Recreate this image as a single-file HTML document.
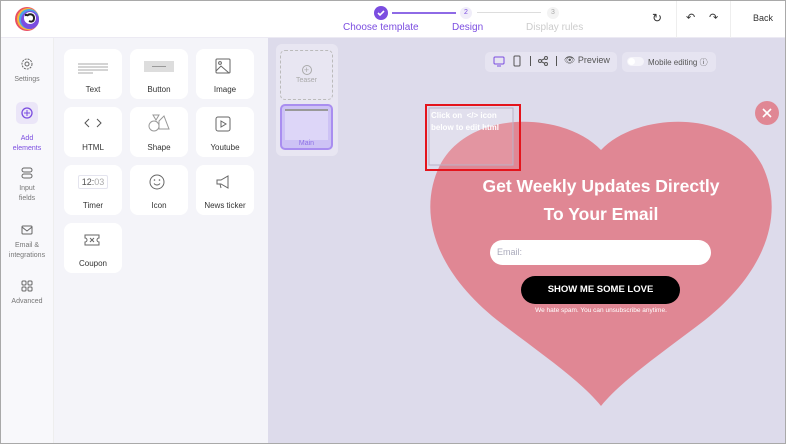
<!DOCTYPE html>
<html><head><style>
*{box-sizing:border-box;margin:0;padding:0}
body{width:786px;height:444px;overflow:hidden;font-family:"Liberation Sans",sans-serif;background:#fff;position:relative}
.frame{position:absolute;inset:0;border:1px solid #a9a9a9;z-index:50;pointer-events:none}
.hdr{position:absolute;left:0;top:0;width:786px;height:38px;background:#fff;border-bottom:1px solid #eceaf3}
.nav{position:absolute;left:0;top:38px;width:54px;height:406px;background:#f8f8fb;border-right:1px solid #eee}
.panel{position:absolute;left:54px;top:38px;width:214px;height:406px;background:#f4f4f9}
.canvas{position:absolute;left:268px;top:38px;width:518px;height:406px;background:#dddbeb}
.card{position:absolute;width:58px;height:50px;background:#fff;border-radius:8px;text-align:center;font-size:8px;color:#333}
.card .l{position:absolute;left:0;right:0;bottom:5px}
.card svg{position:absolute;left:19px;top:9px}
.ni{position:absolute;left:0;width:54px;text-align:center;font-size:7px;color:#777;line-height:10px}
.ni svg{display:block;margin:0 auto 5px}
</style></head><body>
<div class="hdr">
  <svg style="position:absolute;left:14px;top:6px" width="26" height="26" viewBox="0 0 26 26"><circle cx="13" cy="13" r="12" fill="#e94f64"/><circle cx="14" cy="13" r="11" fill="#f5b83a"/><circle cx="15" cy="13" r="10" fill="#4aa3e8"/><circle cx="16" cy="14" r="9" fill="#7b4de0"/><circle cx="16" cy="12" r="6" fill="#fff"/><path d="M13 10c2-3 7-2 7 2s-3 4-5 3" stroke="#222" stroke-width="2" fill="none"/><circle cx="12" cy="9" r="1.2" fill="#222"/></svg>
  <svg style="position:absolute;left:374px;top:6px" width="14" height="14"><circle cx="7" cy="7" r="7" fill="#7b4de0"/><path d="M4 7l2 2 4-4" stroke="#fff" stroke-width="1.6" fill="none"/></svg>
  <div style="position:absolute;left:392px;top:12px;width:64px;height:2px;background:#8e6ae6"></div>
  <div style="position:absolute;left:460px;top:7px;width:12px;height:12px;border-radius:6px;background:#f0edf9;font-size:7px;color:#7b4de0;text-align:center;line-height:12px">2</div>
  <div style="position:absolute;left:477px;top:12px;width:64px;height:1px;background:#ddd"></div>
  <div style="position:absolute;left:547px;top:7px;width:12px;height:12px;border-radius:6px;background:#f3f3f3;font-size:7px;color:#aaa;text-align:center;line-height:12px">3</div>
  <div style="position:absolute;left:343px;top:22px;font-size:10px;color:#7b4de0">Choose template</div>
  <div style="position:absolute;left:452px;top:22px;font-size:10px;color:#7b4de0">Design</div>
  <div style="position:absolute;left:526px;top:22px;font-size:10px;color:#ccc">Display rules</div>
  <div style="position:absolute;left:652px;top:11px;font-size:12px;color:#333">↻</div>
  <div style="position:absolute;left:676px;top:0;width:1px;height:38px;background:#eee"></div>
  <div style="position:absolute;left:686px;top:11px;font-size:11px;color:#333">↶</div>
  <div style="position:absolute;left:709px;top:11px;font-size:11px;color:#333">↷</div>
  <div style="position:absolute;left:730px;top:0;width:1px;height:38px;background:#eee"></div>
  <div style="position:absolute;left:753px;top:13px;font-size:9px;color:#333">Back</div>
</div>
<div class="nav">
  <div class="ni" style="top:20px"><svg width="12" height="12" viewBox="0 0 12 12"><circle cx="6" cy="6" r="2" stroke="#666" fill="none"/><circle cx="6" cy="6" r="5" stroke="#666" stroke-dasharray="2 1" fill="none"/></svg>Settings</div>
  <div style="position:absolute;left:16px;top:64px;width:22px;height:22px;border-radius:5px;background:#ebe6f8"></div>
  <div class="ni" style="top:69px;color:#7b4de0"><svg width="12" height="12" viewBox="0 0 12 12"><circle cx="6" cy="6" r="5" stroke="#7b4de0" fill="none" stroke-width="1.3"/><path d="M6 3v6M3 6h6" stroke="#7b4de0"/></svg><br>Add<br>elements</div>
  <div class="ni" style="top:129px"><svg width="12" height="12"><rect x="1" y="1" width="10" height="4" rx="2" stroke="#666" fill="none"/><rect x="1" y="7" width="10" height="4" rx="2" stroke="#666" fill="none"/></svg>Input<br>fields</div>
  <div class="ni" style="top:186px"><svg width="12" height="12"><rect x="1" y="2" width="10" height="8" rx="1" stroke="#666" fill="none"/><path d="M1 3l5 4 5-4" stroke="#666" fill="none"/></svg>Email &amp;<br>integrations</div>
  <div class="ni" style="top:242px"><svg width="12" height="12"><rect x="1" y="1" width="4" height="4" rx="1" stroke="#666" fill="none"/><rect x="7" y="1" width="4" height="4" rx="1" stroke="#666" fill="none"/><rect x="1" y="7" width="4" height="4" rx="1" stroke="#666" fill="none"/><rect x="7" y="7" width="4" height="4" rx="1" stroke="#666" fill="none"/></svg>Advanced</div>
</div>
<div class="panel"></div>
<div class="card" style="left:64px;top:49px"><svg width="20" height="20" style="left:14px;width:30px"><path d="M0 6h30M0 9h30M0 12h30M0 15h15" stroke="#aaa"/></svg><div class="l">Text</div></div>
<div class="card" style="left:130px;top:49px"><svg width="30" height="12" style="left:14px;top:12px"><rect width="30" height="11" fill="#ddd"/><path d="M8 5.5h14" stroke="#999"/></svg><div class="l">Button</div></div>
<div class="card" style="left:196px;top:49px"><svg width="16" height="16" viewBox="0 0 16 16"><rect x="1" y="1" width="14" height="14" rx="1" stroke="#666" fill="none"/><circle cx="5" cy="5" r="1.4" stroke="#666" fill="none"/><path d="M1 13l5-5 8 7" stroke="#666" fill="none"/></svg><div class="l">Image</div></div>
<div class="card" style="left:64px;top:107px"><svg width="20" height="14"><path d="M6 3l-4 4 4 4M14 3l4 4-4 4" stroke="#555" fill="none"/></svg><div class="l">HTML</div></div>
<div class="card" style="left:130px;top:107px"><svg width="22" height="18" style="left:18px;top:7px"><circle cx="6" cy="12" r="5" stroke="#999" fill="none"/><path d="M5 1h6l-3 5zM11 7l5-5 5 13h-10z" stroke="#999" fill="none"/></svg><div class="l">Shape</div></div>
<div class="card" style="left:196px;top:107px"><svg width="16" height="16"><rect x="1" y="1" width="14" height="14" rx="2" stroke="#666" fill="none"/><path d="M6 5l5 3-5 3z" stroke="#666" fill="none"/></svg><div class="l">Youtube</div></div>
<div class="card" style="left:64px;top:165px"><div style="position:absolute;left:14px;top:10px;width:30px;height:14px;border:1px solid #e4e4ee;border-radius:2px;font-size:9px;line-height:12px;color:#555">12:<span style="color:#aaa">03</span></div><div class="l">Timer</div></div>
<div class="card" style="left:130px;top:165px"><svg width="16" height="16"><circle cx="8" cy="8" r="7" stroke="#666" fill="none"/><path d="M5 9.5c1.5 2 4.5 2 6 0" stroke="#666" fill="none"/><circle cx="5.5" cy="6" r=".8" fill="#666"/><circle cx="10.5" cy="6" r=".8" fill="#666"/></svg><div class="l">Icon</div></div>
<div class="card" style="left:196px;top:165px"><svg width="18" height="16"><path d="M2 6h4l7-4v12l-7-4H2zM5 10l1 4" stroke="#666" fill="none"/></svg><div class="l">News ticker</div></div>
<div class="card" style="left:64px;top:223px"><svg width="18" height="16"><path d="M2 3h14v3a2 2 0 0 0 0 4v3H2v-3a2 2 0 0 0 0-4z M7 6l4 4M11 6l-4 4" stroke="#666" fill="none"/></svg><div class="l">Coupon</div></div>

<div class="canvas"></div>
<div style="position:absolute;left:276px;top:44px;width:62px;height:112px;background:#e8e6f2;border-radius:6px"></div>
<div style="position:absolute;left:280px;top:50px;width:53px;height:50px;border:1px dashed #bbb;border-radius:5px;text-align:center;font-size:7px;color:#aaa;padding-top:14px"><div style="width:10px;height:10px;border:1px solid #aaa;border-radius:50%;margin:0 auto 2px;line-height:8px;font-size:9px">+</div>Teaser</div>
<div style="position:absolute;left:280px;top:104px;width:53px;height:46px;border:2px solid #a98ef0;background:#cdc2f5;border-radius:5px;text-align:center;font-size:7px;color:#8d70e6"><div style="margin:3px 3px 0;height:31px;background:#ddd6f8;border-top:2px solid #999"></div>Main</div>

<div style="position:absolute;left:485px;top:52px;width:132px;height:20px;background:#e6e4f1;border-radius:5px"></div>
<svg style="position:absolute;left:493px;top:56px" width="12" height="11"><rect x="1" y="1" width="10" height="7" rx="1" stroke="#7b4de0" fill="none"/><path d="M4 10h4" stroke="#7b4de0"/></svg>
<svg style="position:absolute;left:513px;top:55px" width="8" height="12"><rect x="1" y="1" width="6" height="10" rx="1" stroke="#555" fill="none"/></svg>
<div style="position:absolute;left:530px;top:56px;width:1px;height:10px;background:#555"></div>
<svg style="position:absolute;left:538px;top:56px" width="10" height="10"><circle cx="2" cy="5" r="1.5" stroke="#555" fill="none"/><circle cx="8" cy="2" r="1.5" stroke="#555" fill="none"/><circle cx="8" cy="8" r="1.5" stroke="#555" fill="none"/><path d="M3 4.5l4-2M3 5.5l4 2" stroke="#555"/></svg>
<div style="position:absolute;left:556px;top:56px;width:1px;height:10px;background:#555"></div>
<div style="position:absolute;left:564px;top:55px;font-size:9px;color:#555">👁︎ Preview</div>
<div style="position:absolute;left:622px;top:52px;width:94px;height:20px;background:#e6e4f1;border-radius:5px"></div>
<div style="position:absolute;left:627px;top:57px;width:17px;height:9px;background:#f4f3f9;border-radius:5px"><div style="width:7px;height:7px;margin:1px;background:#fff;border-radius:4px"></div></div>
<div style="position:absolute;left:648px;top:57px;font-size:8px;color:#555">Mobile editing ⓘ</div>

<svg style="position:absolute;left:0;top:0" width="786" height="444">
<path d="M601,150 C565,112 470,108 440,165 C418,210 432,268 497,320 C540,353 580,380 601,406 C622,380 662,353 705,320 C770,268 784,210 762,165 C732,108 637,112 601,150 Z" fill="#e08794"/>
<circle cx="767" cy="113" r="12" fill="#e08794"/>
<path d="M763 109l8 8M771 109l-8 8" stroke="#fff" stroke-width="1.6"/>
<rect x="429" y="108" width="84" height="57" fill="rgba(255,255,255,0.12)" stroke="#b9b3c8"/>
<rect x="426" y="105" width="94" height="65" fill="none" stroke="#e4141c" stroke-width="2"/>
</svg>
<div style="position:absolute;left:431px;top:110px;font-size:8px;font-weight:bold;color:#fff;line-height:12px">Click on &nbsp;&lt;/&gt; icon<br>below to edit html</div>
<div style="position:absolute;left:430px;top:172px;width:342px;text-align:center;font-size:17.5px;font-weight:bold;color:#fff;line-height:28px">Get Weekly Updates Directly<br>To Your Email</div>
<div style="position:absolute;left:490px;top:240px;width:221px;height:25px;background:#fff;border-radius:13px;font-size:9px;color:#aab;padding:7px 0 0 7px">Email:</div>
<div style="position:absolute;left:521px;top:276px;width:159px;height:28px;background:#000;border-radius:14px;color:#fff;font-size:9.5px;font-weight:bold;text-align:center;line-height:28px">SHOW ME SOME LOVE</div>
<div style="position:absolute;left:440px;top:307px;width:322px;text-align:center;font-size:6.5px;color:#fff">We hate spam. You can unsubscribe anytime.</div>
<div class="frame"></div>
</body></html>
